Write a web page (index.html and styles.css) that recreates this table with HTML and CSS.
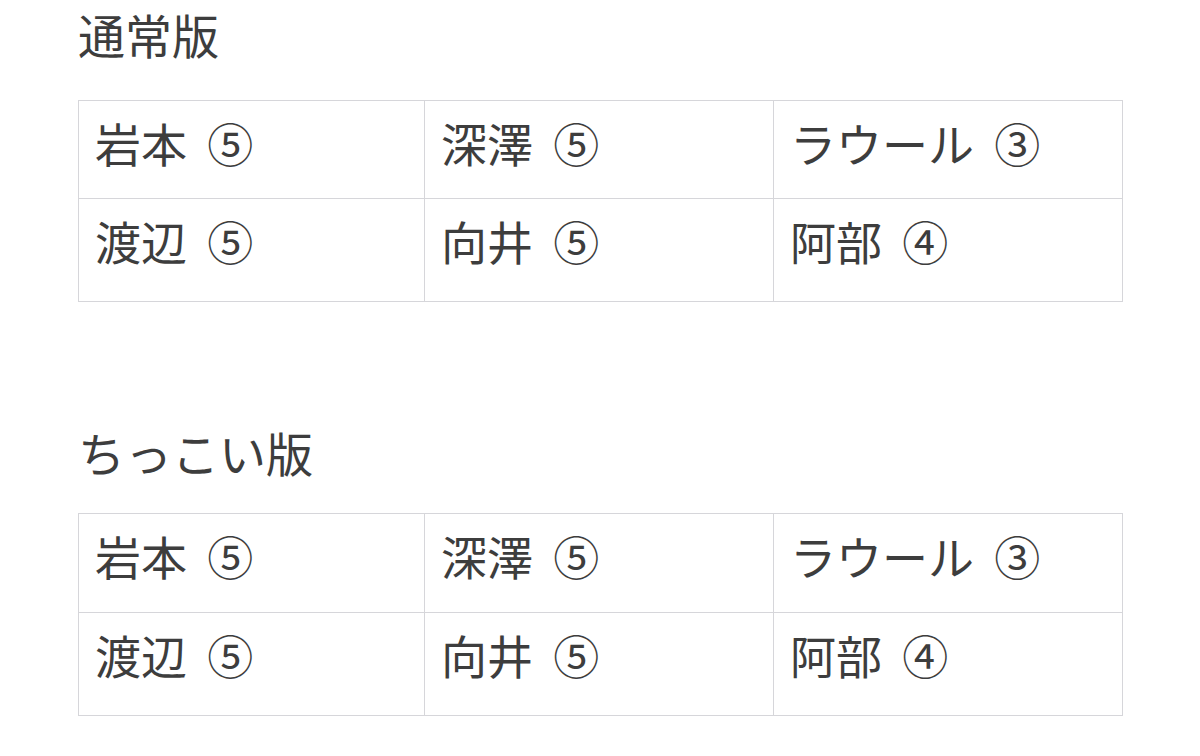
FILE: index.html
```html
<!DOCTYPE html>
<html lang="ja">
<head>
<meta charset="utf-8">
<link rel="stylesheet" href="styles.css">
</head>
<body>
<main class="page">
  <h2 class="title title-first">通常版</h2>
  <table class="grid">
    <colgroup><col class="c1"><col class="c2"><col class="c3"></colgroup>
    <tr class="row-a">
      <td>岩本 ⑤</td><td>深澤 ⑤</td><td>ラウール ③</td>
    </tr>
    <tr class="row-b">
      <td>渡辺 ⑤</td><td>向井 ⑤</td><td>阿部 ④</td>
    </tr>
  </table>
  <h2 class="title title-second">ちっこい版</h2>
  <table class="grid grid-second">
    <colgroup><col class="c1"><col class="c2"><col class="c3"></colgroup>
    <tr class="row-a">
      <td>岩本 ⑤</td><td>深澤 ⑤</td><td>ラウール ③</td>
    </tr>
    <tr class="row-b">
      <td>渡辺 ⑤</td><td>向井 ⑤</td><td>阿部 ④</td>
    </tr>
  </table>
</main>
</body>
</html>
```

FILE: styles.css
```css
html, body {
  margin: 0;
  padding: 0;
  background: #ffffff;
}
body {
  font-family: "Noto Sans CJK JP", "Noto Sans", sans-serif;
  color: #3d3d3d;
}
.page {
  padding: 10px 0 0 78px;
  width: 1044px;
}
.title {
  margin: 0;
  font-size: 47px;
  line-height: 47px;
  font-weight: 400;
}
.title-first {
  margin-bottom: 43px;
}
.title-second {
  margin-top: 126px;
  margin-bottom: 38px;
}
.grid {
  width: 1044px;
  border-collapse: collapse;
  table-layout: fixed;
}
.c1 { width: 346px; }
.c2 { width: 349px; }
.c3 { width: 349px; }
.grid td {
  border: 1px solid #d6d6da;
  font-size: 46px;
  line-height: 46px;
  padding: 18px 0 0 16px;
  vertical-align: top;
  box-sizing: border-box;
  white-space: nowrap;
  word-spacing: 10px;
}
.row-a td {
  height: 98px;
}
.row-b td {
  height: 103px;
}
.grid-second .row-a td {
  height: 99px;
}
```
